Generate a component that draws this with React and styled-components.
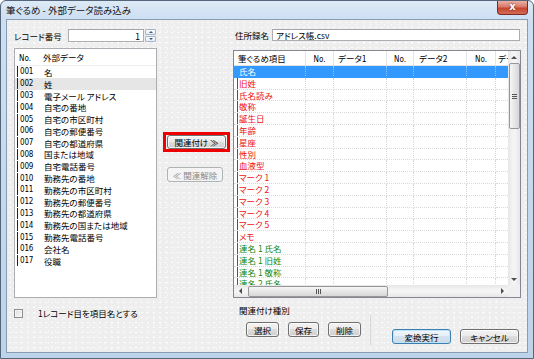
import styled, { createGlobalStyle, css } from "styled-components";

const GlobalStyle = createGlobalStyle`
  html, body {
    margin: 0;
    padding: 0;
    background: #ffffff;
  }
  body {
    font-family: "Noto Sans CJK JP", "Noto Sans", sans-serif;
    font-size: 8.5px;
    font-feature-settings: "palt";
    color: #000;
  }
  * {
    box-sizing: border-box;
  }
`;

const Window = styled.div`
  width: 534px;
  height: 359px;
  border: 1px solid #56667a;
  border-radius: 6px 6px 0 0;
  background: linear-gradient(180deg, #dde9f6 0px, #cddff2 18px, #bdd3ea 100%);
  display: flex;
  flex-direction: column;
  overflow: hidden;
`;

const TitleBar = styled.div`
  height: 17px;
  display: flex;
  align-items: flex-start;
  justify-content: space-between;
  padding-left: 5px;
`;

const Title = styled.span`
  font-size: 9.5px;
  line-height: 18px;
  color: #111;
`;

const CloseButton = styled.div`
  width: 31px;
  height: 14px;
  margin-right: 5px;
  border: 1px solid #7a2c24;
  border-top: none;
  border-radius: 0 0 4px 4px;
  background: linear-gradient(180deg, #eab0a6 0%, #d97a69 45%, #c6452f 55%, #d46b55 100%);
  color: #fff;
  font: bold 10px/12px "DejaVu Sans", sans-serif;
  text-align: center;
  text-shadow: 0 0 2px #5a1a12;
`;

const Client = styled.div`
  flex: 1;
  margin: 1px 5px 5px 5px;
  border: 1px solid #8a9cb2;
  background-color: #eeeeee;
  background-image: radial-gradient(rgba(255, 255, 255, 0.9) 0.5px, transparent 0.9px),
    radial-gradient(rgba(255, 255, 255, 0.7) 0.5px, transparent 0.9px);
  background-size: 6px 5px, 7px 6px;
  background-position: 0 0, 3px 2px;
  display: flex;
  padding: 8px 6px 0 7px;
`;

/* ---------- left column ---------- */

const LeftCol = styled.div`
  width: 143px;
  display: flex;
  flex-direction: column;
`;

const FieldRow = styled.div`
  margin-top: 1px;
  height: ${(p) => p.$h}px;
  display: flex;
  align-items: center;
`;

const FieldLabel = styled.span`
  width: ${(p) => p.$w}px;
  padding-left: ${(p) => p.$pad || 0}px;
  white-space: nowrap;
`;

const TextBox = styled.div`
  width: ${(p) => (p.$w ? `${p.$w}px` : "auto")};
  flex: ${(p) => (p.$w ? "none" : "1")};
  height: 100%;
  margin-right: ${(p) => p.$mr || 0}px;
  border: 1px solid #abadb3;
  border-top-color: #a3a6ad;
  background: #fff;
  display: flex;
  align-items: center;
  justify-content: ${(p) => (p.$right ? "flex-end" : "flex-start")};
  padding: 0 3px;
  font-size: 8.5px;
`;

const Spinner = styled.div`
  width: 11px;
  height: 13px;
  margin-left: 1px;
  display: flex;
  flex-direction: column;
  gap: 1px;
`;

const SpinHalf = styled.div`
  flex: 1;
  border: 1px solid #a6b6c9;
  border-radius: 1px;
  background: linear-gradient(180deg, #fbfcfe, #e4ebf3);
  display: flex;
  align-items: center;
  justify-content: center;
`;

const Tri = styled.span`
  width: 0;
  height: 0;
  ${(p) => {
    const s = p.$s || 3;
    const c = p.$c || "#4d4d4d";
    if (p.$dir === "up")
      return css`
        border-left: ${s}px solid transparent;
        border-right: ${s}px solid transparent;
        border-bottom: ${s}px solid ${c};
      `;
    if (p.$dir === "down")
      return css`
        border-left: ${s}px solid transparent;
        border-right: ${s}px solid transparent;
        border-top: ${s}px solid ${c};
      `;
    if (p.$dir === "left")
      return css`
        border-top: ${s}px solid transparent;
        border-bottom: ${s}px solid transparent;
        border-right: ${s}px solid ${c};
      `;
    return css`
      border-top: ${s}px solid transparent;
      border-bottom: ${s}px solid transparent;
      border-left: ${s}px solid ${c};
    `;
  }}
`;

const List = styled.div`
  margin-top: 6px;
  height: 250px;
  border: 1px solid #abadb3;
  background: #fff;
  overflow: hidden;
`;

const ListHeader = styled.div`
  height: 17px;
  display: flex;
  align-items: center;
  border-bottom: 1px solid #ededed;
`;

const HeadCell = styled.span`
  width: ${(p) => p.$w}px;
  padding-left: ${(p) => p.$pad || 0}px;
  text-align: ${(p) => p.$align || "left"};
  white-space: nowrap;
  overflow: hidden;
`;

const ListRow = styled.div`
  height: 11.8px;
  display: flex;
  align-items: center;
  background: ${(p) => (p.$selected ? "#e6e6e6" : "transparent")};
`;

const NoCell = styled.span`
  width: 28px;
  padding-left: 2px;
  display: flex;
`;

const Num = styled.span`
  border-left: 1px solid #222;
  padding-left: 2px;
  line-height: 11px;
  font-family: "Liberation Sans Narrow", "DejaVu Sans Condensed", "Liberation Sans", sans-serif;
  font-size: 8px;
  letter-spacing: -0.2px;
`;

const NarrowText = styled.span`
  font-family: "Liberation Sans Narrow", "DejaVu Sans Condensed", "Liberation Sans", sans-serif;
  font-size: 8px;
`;

const ItemCell = styled.span`
  padding-left: 1px;
  white-space: nowrap;
`;

const CheckRow = styled.div`
  margin-top: 11px;
  height: 9px;
  display: flex;
  align-items: center;
`;

const CheckBox = styled.span`
  width: 9px;
  height: 9px;
  border: 1px solid #8f8f8f;
  background: linear-gradient(135deg, #dcdcdc, #fbfbfb);
  box-shadow: inset 0 0 0 1px #f4f4f4;
`;

const CheckLabel = styled.span`
  margin-left: 15px;
  line-height: 9px;
`;

/* ---------- buttons ---------- */

const Button = styled.div`
  width: ${(p) => p.$w}px;
  height: ${(p) => p.$h || 15}px;
  border: 1px solid #707070;
  border-radius: 3px;
  background: linear-gradient(180deg, #f3f3f3 0%, #ebebeb 45%, #dddddd 50%, #cfcfcf 100%);
  box-shadow: inset 0 0 0 1px rgba(255, 255, 255, 0.7);
  display: flex;
  align-items: center;
  justify-content: center;
  white-space: nowrap;
  font-size: 8.5px;

  ${(p) =>
    p.$primary &&
    css`
      border-color: #3c7fb1;
      background: linear-gradient(180deg, #f0f6fb 0%, #e6eef6 45%, #d6e2ee 50%, #cbd9e8 100%);
      box-shadow: inset 0 0 0 1px #bfe3f8;
    `}

  ${(p) =>
    p.$disabled &&
    css`
      border-color: #adb2b5;
      background: #f4f4f4;
      box-shadow: none;
      color: #8a8a8a;
    `}
`;

const MidCol = styled.div`
  width: 76px;
  display: flex;
  flex-direction: column;
  align-items: center;
  padding-top: 104px;
`;

const RedMark = styled.div`
  border: 3px solid #ee0000;
  padding: 0 1px;
  margin-left: 3px;
`;

const Gap = styled.div`
  height: ${(p) => p.$h}px;
`;

/* ---------- right column ---------- */

const RightCol = styled.div`
  width: 288px;
  display: flex;
  flex-direction: column;
`;

const COLS = "72px 28px 53px 27px 53px 29px 60px";

const Grid = styled.div`
  margin-top: 9px;
  height: 248px;
  border: 1px solid #828790;
  background: #fff;
  display: grid;
  grid-template-columns: 274px 12px;
  grid-template-rows: 234px 12px;
`;

const Viewport = styled.div`
  overflow: hidden;
`;

const GridHead = styled.div`
  height: 15px;
  width: 322px;
  display: grid;
  grid-template-columns: ${COLS};
  border-bottom: 1px solid #e2e2e2;
`;

const GHCell = styled.span`
  border-right: 1px solid #e6e6e6;
  line-height: 14px;
  padding-left: ${(p) => p.$pad || 0}px;
  text-align: ${(p) => p.$align || "left"};
  white-space: nowrap;
  overflow: hidden;
`;

const toneColor = {
  selected: "#ffffff",
  red: "#ee1111",
  green: "#118811",
};

const GridRow = styled.div`
  height: 11.8px;
  width: 322px;
  display: grid;
  grid-template-columns: ${COLS};
  background: ${(p) => (p.$tone === "selected" ? "#3399ff" : "transparent")};
  color: ${(p) => toneColor[p.$tone]};
`;

const GCell = styled.span`
  border-right: 1px dotted ${(p) => (p.$sel ? "rgba(255,255,255,0.45)" : "#d6d6d6")};
  border-bottom: 1px dotted ${(p) => (p.$sel ? "#3399ff" : "#dadada")};
  line-height: 10.8px;
  white-space: nowrap;
  overflow: hidden;
`;

const NameCell = styled(GCell)`
  padding-left: 3px;
  display: flex;
`;

const NameText = styled.span`
  border-left: 1px solid ${(p) => (p.$sel ? "transparent" : "currentColor")};
  padding-left: 1px;
`;

const VScroll = styled.div`
  background: linear-gradient(90deg, #e6e6e6, #f4f4f4 40%, #f4f4f4 60%, #e6e6e6);
  display: flex;
  flex-direction: column;
`;

const HScroll = styled.div`
  background: linear-gradient(180deg, #e6e6e6, #f4f4f4 40%, #f4f4f4 60%, #e6e6e6);
  display: flex;
`;

const Corner = styled.div`
  background: #f0f0f0;
`;

const ArrowBox = styled.div`
  width: 12px;
  height: 12px;
  flex: none;
  display: flex;
  align-items: center;
  justify-content: center;
`;

const Thumb = styled.div`
  flex: none;
  border: 1px solid #979797;
  border-radius: 2px;
  display: flex;
  align-items: center;
  justify-content: center;
  ${(p) =>
    p.$vertical
      ? css`
          width: 11px;
          margin-left: 1px;
          height: 66px;
          background: linear-gradient(90deg, #f6f6f6, #e6e6e6 50%, #d7d7d7);
        `
      : css`
          height: 11px;
          margin-top: 1px;
          width: 140px;
          margin-left: 2px;
          background: linear-gradient(180deg, #f6f6f6, #e6e6e6 50%, #d7d7d7);
        `}
`;

const Grip = styled.span`
  width: 5px;
  height: 5px;
  background: repeating-linear-gradient(
    ${(p) => (p.$vertical ? "180deg" : "90deg")},
    #555 0 1px,
    transparent 1px 2px
  );
`;

const Spacer = styled.div`
  flex: 1;
`;

const Bottom = styled.div`
  display: flex;
`;

const Group = styled.div`
  width: 138px;
  display: flex;
  flex-direction: column;
`;

const Caption = styled.span`
  margin: 7px 0 0 6px;
  line-height: 10px;
`;

const ButtonRow = styled.div`
  height: 30px;
  padding: 7px 0 0 13px;
  display: flex;
  align-items: flex-start;
  gap: ${(p) => p.$gap || 9}px;
  border-right: ${(p) => (p.$divider ? "1px solid #d8d8d8" : "none")};
`;

const ActionRow = styled.div`
  margin-left: 21px;
  padding-top: 31px;
  display: flex;
  gap: 9px;
`;

const sourceRows = [
  ["001", "名"],
  ["002", "姓"],
  ["003", "電子メール アドレス"],
  ["004", "自宅の番地"],
  ["005", "自宅の市区町村"],
  ["006", "自宅の郵便番号"],
  ["007", "自宅の都道府県"],
  ["008", "国または地域"],
  ["009", "自宅電話番号"],
  ["010", "勤務先の番地"],
  ["011", "勤務先の市区町村"],
  ["012", "勤務先の郵便番号"],
  ["013", "勤務先の都道府県"],
  ["014", "勤務先の国または地域"],
  ["015", "勤務先電話番号"],
  ["016", "会社名"],
  ["017", "役職"],
];

const fields = [
  ["氏名", "selected"],
  ["旧姓", "red"],
  ["氏名読み", "red"],
  ["敬称", "red"],
  ["誕生日", "red"],
  ["年齢", "red"],
  ["星座", "red"],
  ["性別", "red"],
  ["血液型", "red"],
  ["マーク 1", "red"],
  ["マーク 2", "red"],
  ["マーク 3", "red"],
  ["マーク 4", "red"],
  ["マーク 5", "red"],
  ["メモ", "red"],
  ["連名 1 氏名", "green"],
  ["連名 1 旧姓", "green"],
  ["連名 1 敬称", "green"],
  ["連名 2 氏名", "green"],
];

const heads = [
  ["筆ぐるめ項目", "left", 4],
  ["No.", "center", 0],
  ["データ1", "left", 4],
  ["No.", "center", 0],
  ["データ2", "left", 5],
  ["No.", "center", 0],
  ["データ3", "left", 2],
];

export default function App() {
  return (
    <>
      <GlobalStyle />
      <Window>
        <TitleBar>
          <Title>筆ぐるめ - 外部データ読み込み</Title>
          <CloseButton>x</CloseButton>
        </TitleBar>
        <Client>
          <LeftCol>
            <FieldRow $h={13}>
              <FieldLabel $w={54}>レコード番号</FieldLabel>
              <TextBox $w={76} $right>
                1
              </TextBox>
              <Spinner>
                <SpinHalf>
                  <Tri $dir="up" $s={2} $c="#3d5a80" />
                </SpinHalf>
                <SpinHalf>
                  <Tri $dir="down" $s={2} $c="#3d5a80" />
                </SpinHalf>
              </Spinner>
            </FieldRow>
            <List>
              <ListHeader>
                <HeadCell $w={28} $pad={4}>
                  <NarrowText>No.</NarrowText>
                </HeadCell>
                <HeadCell $w={100} $pad={0}>
                  外部データ
                </HeadCell>
              </ListHeader>
              {sourceRows.map(([no, label]) => (
                <ListRow key={no} $selected={no === "002"}>
                  <NoCell>
                    <Num>{no}</Num>
                  </NoCell>
                  <ItemCell>{label}</ItemCell>
                </ListRow>
              ))}
            </List>
            <CheckRow>
              <CheckBox />
              <CheckLabel>1レコード目を項目名とする</CheckLabel>
            </CheckRow>
          </LeftCol>

          <MidCol>
            <RedMark>
              <Button $w={59} $h={14}>
                関連付け ≫
              </Button>
            </RedMark>
            <Gap $h={15} />
            <Button $w={56} $disabled>
              ≪ 関連解除
            </Button>
          </MidCol>

          <RightCol>
            <FieldRow $h={12}>
              <FieldLabel $w={39} $pad={2}>
                住所録名
              </FieldLabel>
              <TextBox $mr={1}>アドレス帳.csv</TextBox>
            </FieldRow>
            <Grid>
              <Viewport>
                <GridHead>
                  {heads.map(([h, align, pad], i) => (
                    <GHCell key={i} $align={align} $pad={pad}>
                      {h === "No." ? <NarrowText>No.</NarrowText> : h}
                    </GHCell>
                  ))}
                </GridHead>
                {fields.map(([name, tone]) => (
                  <GridRow key={name} $tone={tone}>
                    <NameCell $sel={tone === "selected"}>
                      <NameText $sel={tone === "selected"}>{name}</NameText>
                    </NameCell>
                    {[1, 2, 3, 4, 5, 6].map((c) => (
                      <GCell key={c} $sel={tone === "selected"} />
                    ))}
                  </GridRow>
                ))}
              </Viewport>
              <VScroll>
                <ArrowBox>
                  <Tri $dir="up" />
                </ArrowBox>
                <Thumb $vertical>
                  <Grip $vertical />
                </Thumb>
                <Spacer />
                <ArrowBox>
                  <Tri $dir="down" />
                </ArrowBox>
              </VScroll>
              <HScroll>
                <ArrowBox>
                  <Tri $dir="left" />
                </ArrowBox>
                <Thumb>
                  <Grip />
                </Thumb>
                <Spacer />
                <ArrowBox>
                  <Tri $dir="right" />
                </ArrowBox>
              </HScroll>
              <Corner />
            </Grid>
            <Bottom>
              <Group>
                <Caption>関連付け種別</Caption>
                <ButtonRow $divider $gap={9}>
                  <Button $w={33}>選択</Button>
                  <Button $w={31}>保存</Button>
                  <Button $w={33}>削除</Button>
                </ButtonRow>
              </Group>
              <ActionRow>
                <Button $w={59} $primary>
                  変換実行
                </Button>
                <Button $w={59}>キャンセル</Button>
              </ActionRow>
            </Bottom>
          </RightCol>
        </Client>
      </Window>
    </>
  );
}
